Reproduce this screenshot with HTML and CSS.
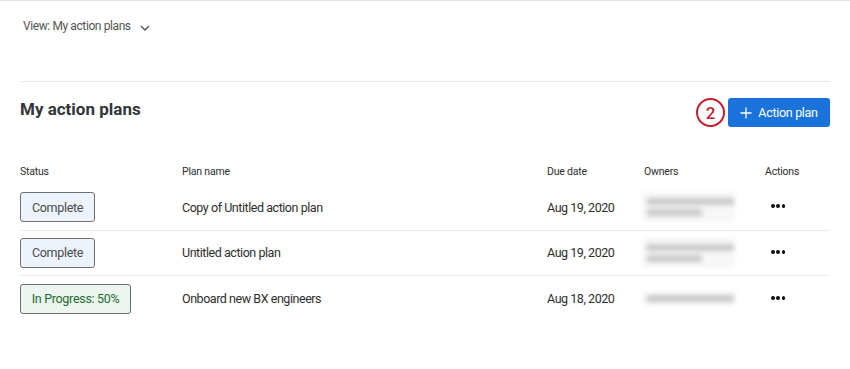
FILE: index.html
```html
<!DOCTYPE html>
<html>
<head>
<meta charset="utf-8">
<link rel="stylesheet" href="styles.css">
</head>
<body>
<div class="topline"></div>
<div class="viewbar">
  <span class="view-label">View: My action plans</span>
  <svg class="chev" width="10" height="6" viewBox="0 0 10 6"><path d="M1 1 L5 5 L9 1" fill="none" stroke="#555" stroke-width="1.4"/></svg>
</div>
<div class="content">
  <div class="titlebar">
    <h1 class="title">My action plans</h1>
    <div class="actions-top">
      <div class="step">2</div>
      <button class="btn-primary"><svg width="12" height="12" viewBox="0 0 12 12"><path d="M6 0.5 V11.5 M0.5 6 H11.5" stroke="#fff" stroke-width="1.3"/></svg><span>Action plan</span></button>
    </div>
  </div>
  <div class="table">
    <div class="row head">
      <div class="c-status">Status</div>
      <div class="c-name">Plan name</div>
      <div class="c-due">Due date</div>
      <div class="c-owner">Owners</div>
      <div class="c-act">Actions</div>
    </div>
    <div class="row">
      <div class="c-status"><span class="badge done">Complete</span></div>
      <div class="c-name">Copy of Untitled action plan</div>
      <div class="c-due">Aug 19, 2020</div>
      <div class="c-owner"><div class="blur"><span class="b1"></span><span class="b2"></span></div></div>
      <div class="c-act"><span class="dots"><i></i><i></i><i></i></span></div>
    </div>
    <div class="row">
      <div class="c-status"><span class="badge done">Complete</span></div>
      <div class="c-name">Untitled action plan</div>
      <div class="c-due">Aug 19, 2020</div>
      <div class="c-owner"><div class="blur"><span class="b1"></span><span class="b2"></span></div></div>
      <div class="c-act"><span class="dots"><i></i><i></i><i></i></span></div>
    </div>
    <div class="row last">
      <div class="c-status"><span class="badge prog">In Progress: 50%</span></div>
      <div class="c-name">Onboard new BX engineers</div>
      <div class="c-due">Aug 18, 2020</div>
      <div class="c-owner"><div class="blur single"><span class="b1"></span></div></div>
      <div class="c-act"><span class="dots"><i></i><i></i><i></i></span></div>
    </div>
  </div>
</div>
</body>
</html>
```
FILE: styles.css
```css
* { box-sizing: border-box; }
body {
  margin: 0;
  background: #fff;
  font-family: Roboto, "Liberation Sans", sans-serif;
  color: #2e2e2e;
}
.topline { height: 1px; background: #e6e6e6; }
.viewbar {
  display: flex;
  align-items: flex-start;
  gap: 9px;
  padding: 16px 0 0 23px;
  height: 80px;
}
.view-label { font-size: 12px; letter-spacing: -0.4px; color: #545454; line-height: 18px; }
.chev { margin-top: 8px; }
.content { margin: 0 20px; border-top: 1px solid #e8e8e8; }
.titlebar {
  display: flex;
  justify-content: space-between;
  align-items: center;
  padding-top: 8px;
  height: 53px;
}
.title {
  margin: 0;
  font-size: 17px;
  font-weight: 700;
  color: #32363a;
  margin-top: -8px;
}
.actions-top { display: flex; align-items: center; gap: 3px; }
.step {
  width: 29px; height: 29px;
  border: 2px solid #c0212e;
  border-radius: 50%;
  color: #c0212e;
  font-size: 17px;
  font-weight: 500;
  display: flex; align-items: center; justify-content: center;
}
.btn-primary {
  height: 29px;
  width: 102px;
  background: #1a73db;
  color: #fff;
  border: 0;
  border-radius: 3px;
  display: flex; align-items: center; justify-content: center;
  gap: 6px;
  font-family: inherit;
  font-size: 12.5px;
  letter-spacing: -0.3px;
  padding: 0;
}
.table { margin-top: 30px; }
.row {
  display: flex;
  align-items: center;
  height: 45.5px;
  border-bottom: 1px solid #ececec;
  font-size: 12.5px;
  letter-spacing: -0.45px;
  color: #2e2e2e;
}
.row.last { border-bottom: 0; }
.row.head { height: 20px; border-bottom: 0; font-size: 10.5px; letter-spacing: -0.2px; align-items: flex-start; }
.c-status { width: 162px; }
.c-name { width: 365px; }
.c-due { width: 97px; }
.c-owner { width: 121px; }
.c-act { flex: 1; display: flex; align-items: center; }
.badge {
  display: inline-flex;
  align-items: center;
  justify-content: center;
  height: 30px;
  padding: 0;
  white-space: nowrap;
  border: 1px solid #6e6e6e;
  border-radius: 3px;
  font-size: 12.5px;
  letter-spacing: -0.3px;
}
.badge.done { background: #edf3fd; color: #4a4a4a; width: 75px; }
.badge.prog { background: #ecf5ee; color: #1d6b33; width: 111px; }
.blur {
  width: 93px;
  height: 30px;
  margin-left: -2px;
  padding: 6px 0 0 5px;
  background: #f7f7f7;
  display: flex; flex-direction: column; gap: 4px;
  filter: blur(2.5px);
}
.blur.single { height: 14px; padding-top: 3px; }
.blur span { display: block; height: 7px; background: #c9c9c9; }
.blur .b1 { width: 87px; }
.blur .b2 { width: 55px; }
.dots { display: flex; gap: 1.5px; margin-left: 6px; margin-top: -2px; }
.dots i { width: 3.8px; height: 3.8px; border-radius: 50%; background: #111; display: block; }
```
